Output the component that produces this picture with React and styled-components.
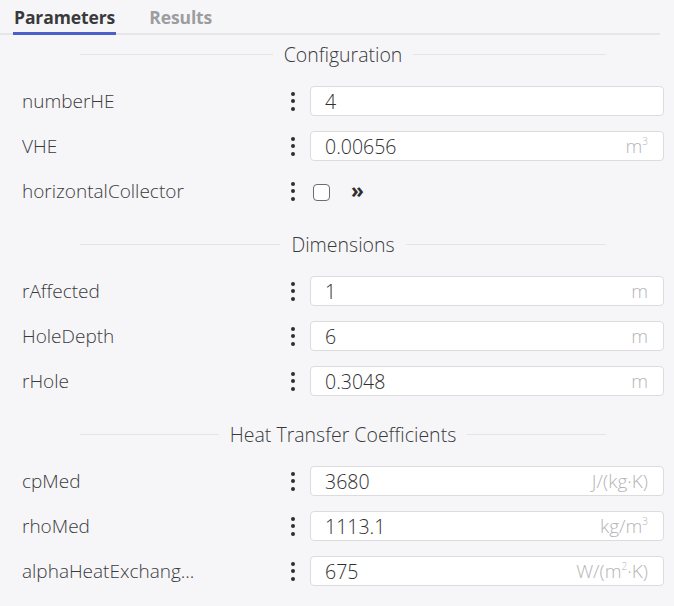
import React, { useState } from 'react';
import styled, { createGlobalStyle } from 'styled-components';

const GlobalStyle = createGlobalStyle`
  html, body {
    margin: 0;
    padding: 0;
    background: #f6f6f8;
  }
  body {
    font-family: "Open Sans", "Noto Sans", sans-serif;
    color: #404042;
  }
`;

const Page = styled.div`
  width: 674px;
  height: 606px;
  overflow: hidden;
`;

const TabBar = styled.div`
  display: flex;
  gap: 32px;
  height: 35px;
  margin-right: 14px;
  padding-left: 13px;
  border-bottom: 2px solid #e6e6e9;
  box-sizing: border-box;
`;

const Tab = styled.div`
  display: flex;
  align-items: center;
  padding: 0 1px 2px;
  font-size: 17.5px;
  font-weight: 700;
  letter-spacing: -0.1px;
  color: ${p => (p.$active ? '#3a3a3c' : '#9d9d9f')};
  box-shadow: ${p => (p.$active ? 'inset 0 -3px 0 #4b5fc6' : 'none')};
  margin-bottom: -2px;
`;

const Section = styled.section`
  padding-top: 7px;
  & + & {
    padding-top: 26px;
  }
`;

const Heading = styled.div`
  display: flex;
  align-items: center;
  gap: 11px;
  height: 24px;
  margin: 0 68px 20px 80px;
  font-size: 19.5px;
  font-weight: 300;
  color: #3a3a3c;
  white-space: nowrap;

  &::before,
  &::after {
    content: '';
    flex: 1;
    height: 1px;
    background: #e4e4e7;
  }
`;

const Rows = styled.div`
  display: grid;
  row-gap: 15px;
`;

const Row = styled.div`
  display: grid;
  grid-template-columns: 264px 24px 1fr;
  align-items: center;
  height: 30px;
  padding: 0 10px 0 22px;
`;

const Label = styled.div`
  font-size: 19px;
  font-weight: 300;
  color: #3a3a3c;
  overflow: hidden;
  text-overflow: ellipsis;
  white-space: nowrap;
`;

const Kebab = styled.div`
  display: flex;
  flex-direction: column;
  align-items: center;
  gap: 3.5px;
  width: 14px;

  span {
    width: 4px;
    height: 4px;
    border-radius: 50%;
    background: #2f2f31;
  }
`;

const Field = styled.div`
  display: flex;
  align-items: center;
  height: 30px;
  padding: 0 15px 0 14px;
  background: #fff;
  border: 1px solid #dcdcdf;
  border-radius: 4px;
  box-sizing: border-box;
`;

const Value = styled.input`
  flex: 1;
  min-width: 0;
  border: 0;
  outline: none;
  padding: 0;
  background: transparent;
  font-family: inherit;
  font-size: 19.5px;
  font-weight: 300;
  color: #2f2f31;
`;

const Unit = styled.span`
  font-size: 19px;
  font-weight: 300;
  color: #b5b5b8;
  white-space: nowrap;

  sup {
    font-size: 10px;
    vertical-align: 8px;
  }
`;

const Toggle = styled.div`
  display: flex;
  align-items: center;
  gap: 21px;
  padding: 3px 0 0 3px;
`;

const Box = styled.span`
  width: 17px;
  height: 17px;
  border: 1.5px solid #6c6c6f;
  border-radius: 4px;
  box-sizing: border-box;
  background: #fff;
`;

const More = styled.span`
  font-size: 21px;
  font-weight: 700;
  line-height: 1;
  color: #2f2f31;
  margin-top: -4px;
`;

const sup = s => <sup>{s}</sup>;

const sections = [
  {
    title: 'Configuration',
    rows: [
      { name: 'numberHE', value: '4' },
      { name: 'VHE', value: '0.00656', unit: <>m{sup('3')}</> },
      { name: 'horizontalCollector', flag: true },
    ],
  },
  {
    title: 'Dimensions',
    rows: [
      { name: 'rAffected', value: '1', unit: 'm' },
      { name: 'HoleDepth', value: '6', unit: 'm' },
      { name: 'rHole', value: '0.3048', unit: 'm' },
    ],
  },
  {
    title: 'Heat Transfer Coefficients',
    rows: [
      { name: 'cpMed', value: '3680', unit: 'J/(kg·K)' },
      { name: 'rhoMed', value: '1113.1', unit: <>kg/m{sup('3')}</> },
      { name: 'alphaHeatExchanger', value: '675', unit: <>W/(m{sup('2')}·K)</> },
    ],
  },
];

const shortName = n => (n.length > 17 ? n.slice(0, 16) + '...' : n);

function ParamRow({ row }) {
  return (
    <Row>
      <Label title={row.name}>{row.flag ? row.name : shortName(row.name)}</Label>
      <Kebab>
        <span />
        <span />
        <span />
      </Kebab>
      {row.flag ? (
        <Toggle>
          <Box />
          <More>»</More>
        </Toggle>
      ) : (
        <Field>
          <Value defaultValue={row.value} />
          {row.unit && <Unit>{row.unit}</Unit>}
        </Field>
      )}
    </Row>
  );
}

export default function App() {
  const [tab, setTab] = useState('Parameters');
  return (
    <Page>
      <GlobalStyle />
      <TabBar>
        {['Parameters', 'Results'].map(t => (
          <Tab key={t} $active={t === tab} onClick={() => setTab(t)}>
            {t}
          </Tab>
        ))}
      </TabBar>
      {sections.map(s => (
        <Section key={s.title}>
          <Heading>{s.title}</Heading>
          <Rows>
            {s.rows.map(r => (
              <ParamRow key={r.name} row={r} />
            ))}
          </Rows>
        </Section>
      ))}
    </Page>
  );
}
